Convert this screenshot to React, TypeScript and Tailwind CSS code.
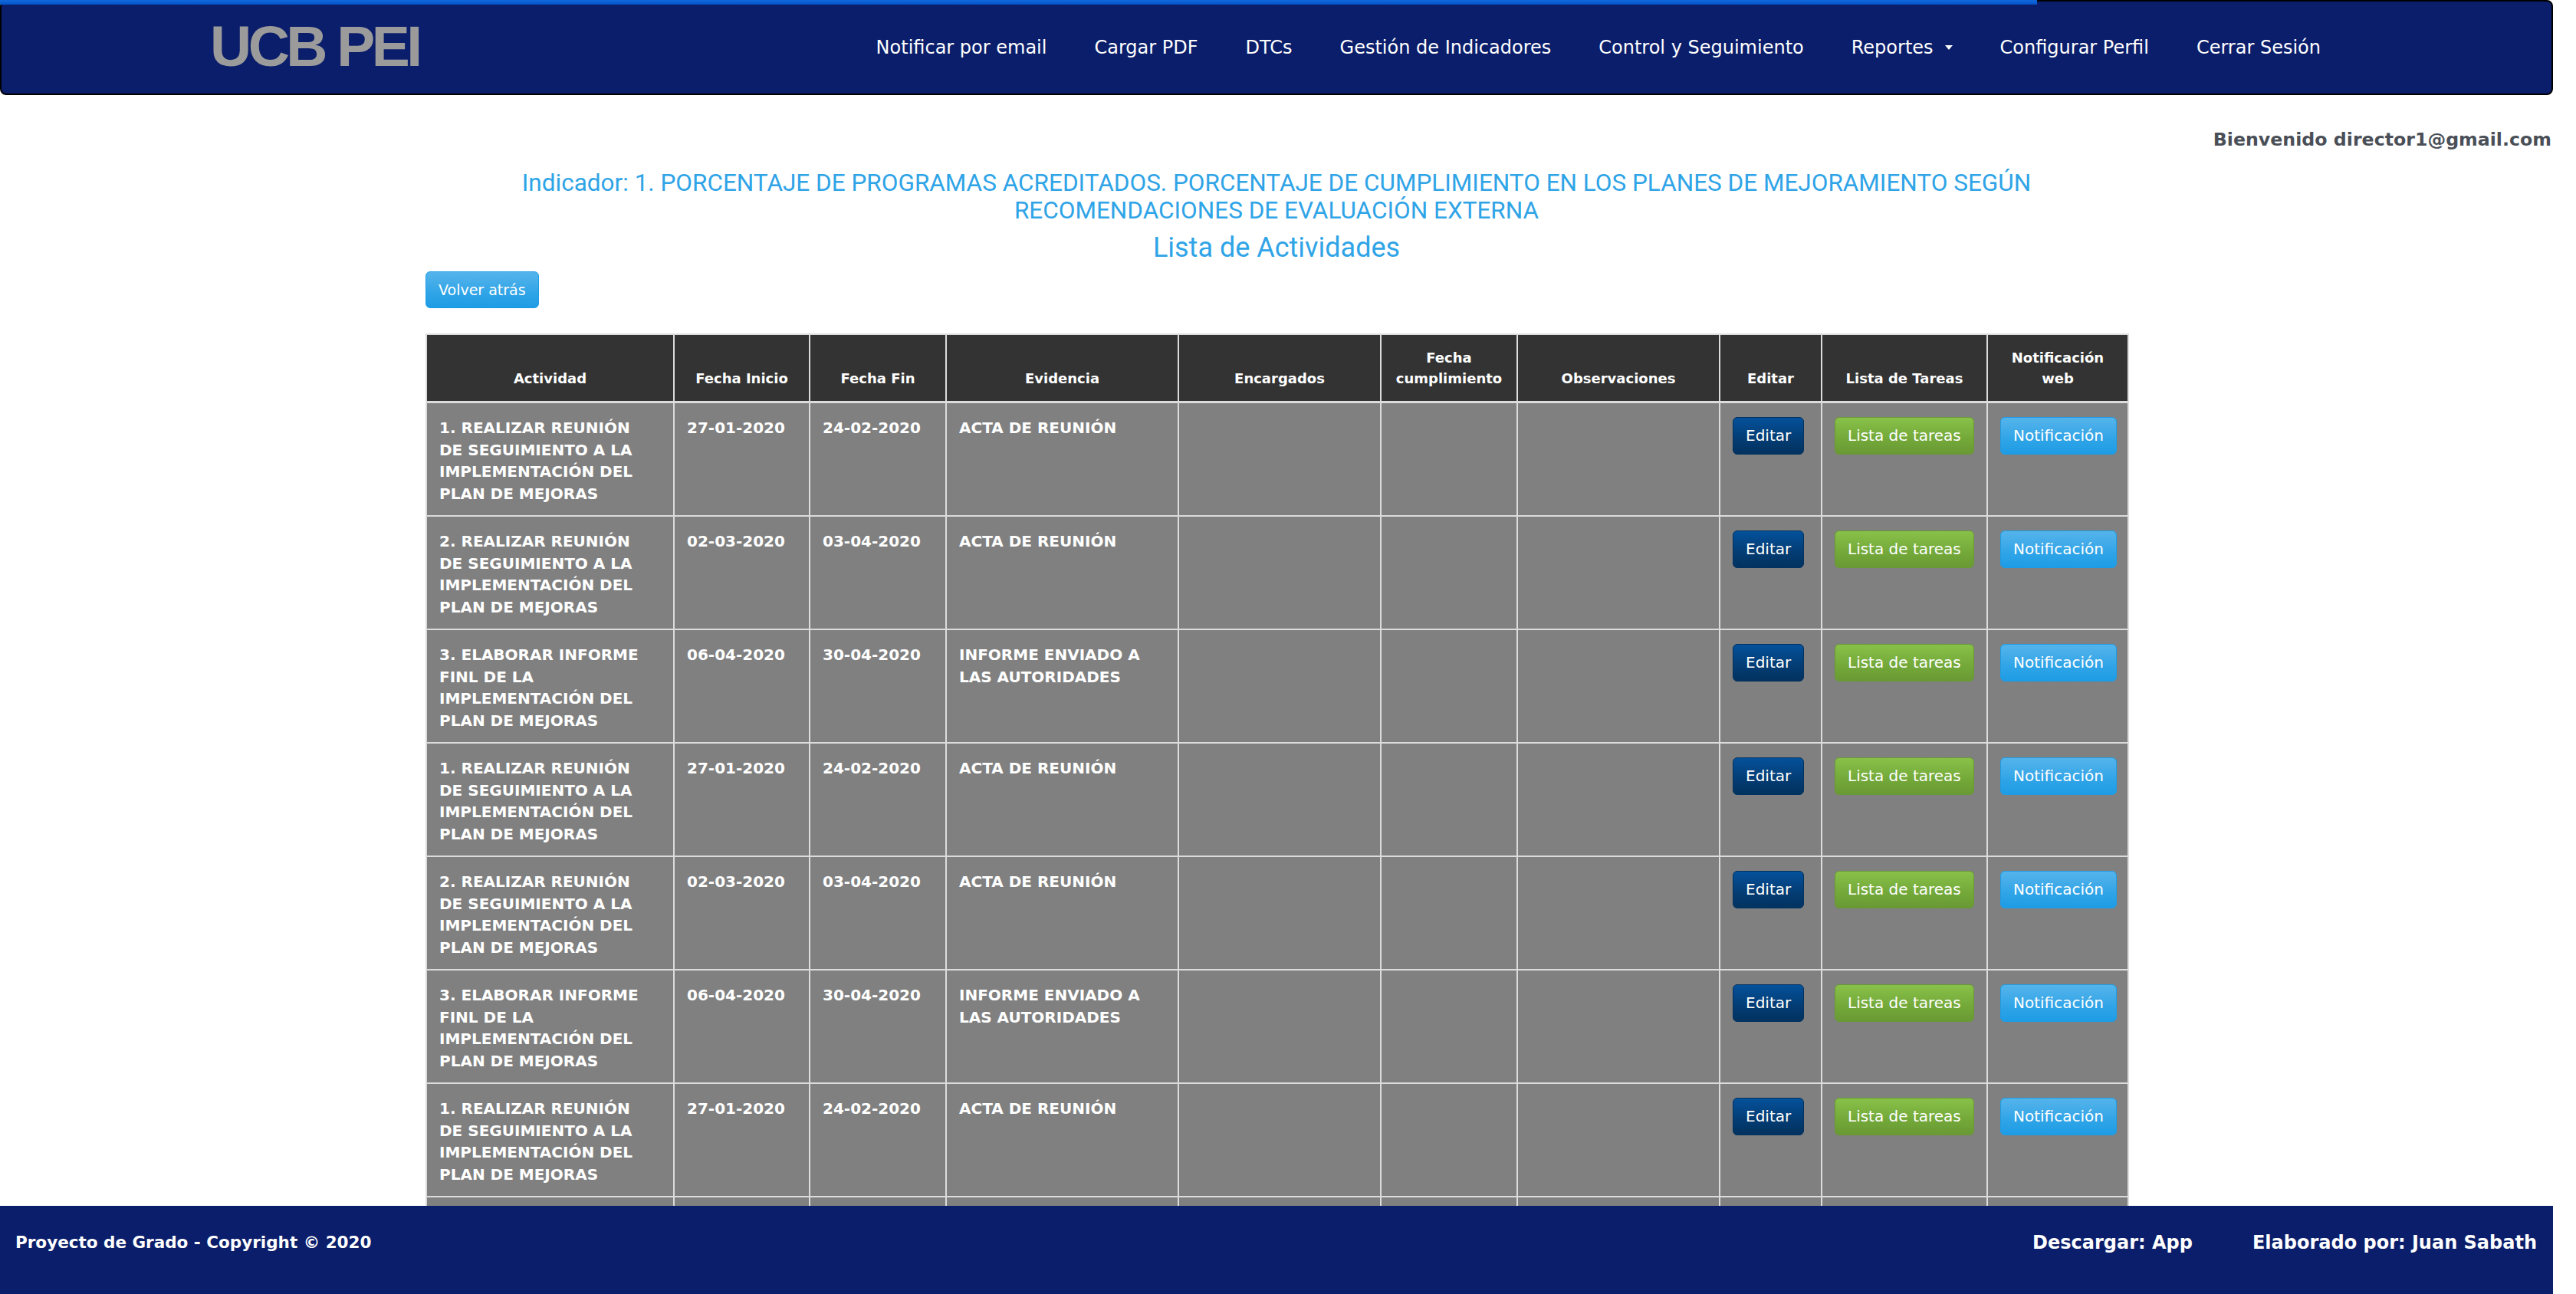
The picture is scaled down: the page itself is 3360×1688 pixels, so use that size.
import React from "react";

interface Actividad {
  actividad: string;
  inicio: string;
  fin: string;
  evidencia: string;
}

const BASE: Actividad[] = [
  {
    actividad: "1. REALIZAR REUNIÓN\nDE SEGUIMIENTO A LA\nIMPLEMENTACIÓN DEL\nPLAN DE MEJORAS",
    inicio: "27-01-2020",
    fin: "24-02-2020",
    evidencia: "ACTA DE REUNIÓN",
  },
  {
    actividad: "2. REALIZAR REUNIÓN\nDE SEGUIMIENTO A LA\nIMPLEMENTACIÓN DEL\nPLAN DE MEJORAS",
    inicio: "02-03-2020",
    fin: "03-04-2020",
    evidencia: "ACTA DE REUNIÓN",
  },
  {
    actividad: "3. ELABORAR INFORME\nFINL DE LA\nIMPLEMENTACIÓN DEL\nPLAN DE MEJORAS",
    inicio: "06-04-2020",
    fin: "30-04-2020",
    evidencia: "INFORME ENVIADO A\nLAS AUTORIDADES",
  },
];

const ROWS: Actividad[] = [...BASE, ...BASE, ...BASE];

const NAV_LINKS = [
  "Notificar por email",
  "Cargar PDF",
  "DTCs",
  "Gestión de Indicadores",
  "Control y Seguimiento",
  "Reportes",
  "Configurar Perfil",
  "Cerrar Sesión",
];

const COLS = [323, 177, 178, 303, 264, 178, 264, 133, 216, 184];

const HEADERS = [
  "Actividad",
  "Fecha Inicio",
  "Fecha Fin",
  "Evidencia",
  "Encargados",
  "Fecha cumplimiento",
  "Observaciones",
  "Editar",
  "Lista de Tareas",
  "Notificación web",
];

const verdana = "font-['DejaVu_Sans','Verdana',sans-serif]";

const thCls =
  "border-2 border-b-[3px] border-[#dcdcdc] px-[16px] pt-[16px] pb-[16px] align-bottom text-center text-[18px] leading-[27px] font-bold text-white";
const tdCls =
  "border-2 border-[#dcdcdc] bg-[#808080] px-[16px] pt-[18px] pb-[14px] align-top text-[20px] leading-[28.5px] font-bold text-white whitespace-pre-line";
const btnCls =
  "inline-flex h-[49px] items-center rounded-[6px] border px-[16px] text-[20px] font-normal text-white whitespace-nowrap";

export default function App() {
  return (
    <div className={`relative h-screen w-full overflow-hidden bg-white ${verdana}`}>
      {/* Navbar */}
      <nav className="relative flex h-[124px] w-[3330px] items-center rounded-[8px] border-2 border-black bg-[#0b1e6b]">
        <div className="absolute -top-[2px] -left-[2px] h-[6px] w-[2657px] bg-linear-to-b from-[#1168dc] to-[#0455c8]" />
        <a className="pl-[272px] pb-[4px] font-['Liberation_Sans',Arial,sans-serif] text-[75px] leading-none font-bold tracking-[-4.5px] text-[#9b9b9b]">
          UCB PEI
        </a>
        <ul className="ml-auto flex items-center gap-[62px] pr-[301px]">
          {NAV_LINKS.map((l) => (
            <li key={l} className="flex items-center text-[24px] leading-[30px] text-white">
              {l}
              {l === "Reportes" && (
                <span className="ml-[15px] inline-block border-x-[5px] border-t-[6px] border-x-transparent border-t-white" />
              )}
            </li>
          ))}
        </ul>
      </nav>

      {/* Bienvenido */}
      <div className="mt-[44px] w-[3330px] pr-[2px] text-right text-[23.7px] leading-[28px] font-bold text-[#4a4f57]">
        Bienvenido director1@gmail.com
      </div>

      <div className="w-[2220px]" style={{ marginLeft: 555 }}>
        <h4 className="mt-[25px] text-center font-['Roboto',sans-serif] text-[31.5px] leading-[36px] text-[#2fa4e7]">
          Indicador: 1. PORCENTAJE DE PROGRAMAS ACREDITADOS. PORCENTAJE DE CUMPLIMIENTO EN LOS PLANES DE MEJORAMIENTO SEGÚN
          <br />
          RECOMENDACIONES DE EVALUACIÓN EXTERNA
        </h4>
        <h3 className="mt-[9px] text-center font-['Roboto',sans-serif] text-[36px] leading-[43px] text-[#2fa4e7]">
          Lista de Actividades
        </h3>

        <button className="mt-[9px] flex h-[48px] items-center rounded-[6px] border border-[#1d9ce5] bg-linear-to-b from-[#54b4eb] via-[#2fa4e7] via-60% to-[#1d9ce5] px-[16px] text-[19px] text-white">
          Volver atrás
        </button>

        <table className="mt-[33px] w-[2220px] table-fixed border-collapse border-2 border-[#dcdcdc]">
          <colgroup>
            {COLS.map((w, i) => (
              <col key={i} style={{ width: w }} />
            ))}
          </colgroup>
          <thead>
            <tr className="bg-[#333333]">
              {HEADERS.map((h) => (
                <th key={h} className={thCls}>
                  {h}
                </th>
              ))}
            </tr>
          </thead>
          <tbody>
            {ROWS.map((r, i) => (
              <tr key={i}>
                <td className={tdCls}>{r.actividad}</td>
                <td className={tdCls}>{r.inicio}</td>
                <td className={tdCls}>{r.fin}</td>
                <td className={tdCls}>{r.evidencia}</td>
                <td className={tdCls}></td>
                <td className={tdCls}></td>
                <td className={tdCls}></td>
                <td className={tdCls}>
                  <button className={`${btnCls} border-[#02325f] bg-linear-to-b from-[#04519b] via-[#033c73] via-60% to-[#02325f]`}>
                    Editar
                  </button>
                </td>
                <td className={tdCls}>
                  <button className={`${btnCls} border-[#699934] bg-linear-to-b from-[#88c149] via-[#73a839] via-60% to-[#699934]`}>
                    Lista de tareas
                  </button>
                </td>
                <td className={tdCls}>
                  <button className={`${btnCls} border-[#1d9ce5] bg-linear-to-b from-[#54b4eb] via-[#2fa4e7] via-60% to-[#1d9ce5]`}>
                    Notificación
                  </button>
                </td>
              </tr>
            ))}
          </tbody>
        </table>
      </div>

      {/* Footer */}
      <footer className="fixed bottom-0 left-0 flex h-[115px] w-[3330px] items-start bg-[#0b1e6b] pt-[34px] text-white">
        <span className="pl-[20px] text-[21.5px] leading-[28px] font-bold">Proyecto de Grado - Copyright © 2020</span>
        <div className="ml-auto flex gap-[78px] pr-[21px] text-[24px] leading-[28px] font-bold">
          <span>Descargar: App</span>
          <span>Elaborado por: Juan Sabath</span>
        </div>
      </footer>
    </div>
  );
}
